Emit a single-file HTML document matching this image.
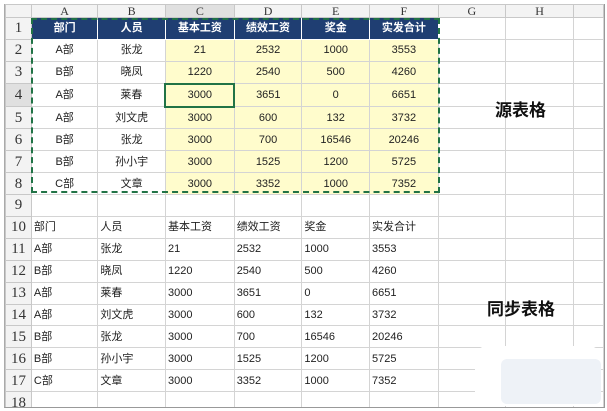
<!DOCTYPE html>
<html><head><meta charset="utf-8"><style>
body{margin:0;background:#fff;width:607px;height:411px;overflow:hidden;position:relative;font-family:"Liberation Sans","Noto Sans CJK SC",sans-serif}
#f{position:absolute;left:4px;top:4px;width:599px;height:403px;border:1px solid #999;border-top:none;border-left:1px solid #aaa;overflow:hidden;background:#fff}
table{border-collapse:collapse;table-layout:fixed;position:absolute;left:0;top:0}
td{border:1px solid #d4d4d4;padding:0;height:20.9px;font-size:11px;color:#222;white-space:nowrap;overflow:hidden;line-height:20px}
tr.h td{height:12px;line-height:12px;background:#f3f3f3;font-family:"Liberation Serif",serif;font-size:12px;text-align:center;color:#333;border-color:#c8c8c8}
td.r{background:#f3f3f3;font-family:"Liberation Serif",serif;font-size:15px;text-align:center;color:#333;border-color:#c8c8c8}
tr.t td.c{background:#1f3e72;color:#fff;font-weight:bold;text-align:center;border-color:#fff}
tr.d td.c{text-align:center}
td.y{background:#fffccc}
td.l{padding-left:2px}
.big{position:absolute;font-size:17px;font-weight:bold;color:#111;font-family:"Liberation Sans","Noto Sans CJK SC",sans-serif}
</style></head><body>
<div id="f">
<table>
<colgroup><col style="width:26px"><col style="width:67px"><col style="width:68px"><col style="width:69px"><col style="width:68px"><col style="width:68px"><col style="width:69px"><col style="width:68px"><col style="width:69px"><col style="width:30px"></colgroup>
<tr class="h"><td></td><td>A</td><td>B</td><td style="background:#e0e0e0">C</td><td>D</td><td>E</td><td>F</td><td>G</td><td>H</td><td></td></tr>
<tr class="t"><td class="r">1</td><td class="c">部门</td><td class="c">人员</td><td class="c">基本工资</td><td class="c">绩效工资</td><td class="c">奖金</td><td class="c">实发合计</td><td></td><td></td><td></td></tr>
<tr class="d"><td class="r">2</td><td class="c">A部</td><td class="c">张龙</td><td class="c y">21</td><td class="c y">2532</td><td class="c y">1000</td><td class="c y">3553</td><td></td><td></td><td></td></tr>
<tr class="d"><td class="r">3</td><td class="c">B部</td><td class="c">晓凤</td><td class="c y">1220</td><td class="c y">2540</td><td class="c y">500</td><td class="c y">4260</td><td></td><td></td><td></td></tr>
<tr class="d"><td class="r" style="background:#e0e0e0">4</td><td class="c">A部</td><td class="c">莱春</td><td class="c y" style="border:2px solid #217346">3000</td><td class="c y">3651</td><td class="c y">0</td><td class="c y">6651</td><td></td><td></td><td></td></tr>
<tr class="d"><td class="r">5</td><td class="c">A部</td><td class="c">刘文虎</td><td class="c y">3000</td><td class="c y">600</td><td class="c y">132</td><td class="c y">3732</td><td></td><td></td><td></td></tr>
<tr class="d"><td class="r">6</td><td class="c">B部</td><td class="c">张龙</td><td class="c y">3000</td><td class="c y">700</td><td class="c y">16546</td><td class="c y">20246</td><td></td><td></td><td></td></tr>
<tr class="d"><td class="r">7</td><td class="c">B部</td><td class="c">孙小宇</td><td class="c y">3000</td><td class="c y">1525</td><td class="c y">1200</td><td class="c y">5725</td><td></td><td></td><td></td></tr>
<tr class="d"><td class="r">8</td><td class="c">C部</td><td class="c">文章</td><td class="c y">3000</td><td class="c y">3352</td><td class="c y">1000</td><td class="c y">7352</td><td></td><td></td><td></td></tr>
<tr><td class="r" style="height:19px;line-height:19px">9</td><td></td><td></td><td></td><td></td><td></td><td></td><td></td><td></td><td></td></tr>
<tr><td class="r">10</td><td class="l">部门</td><td class="l">人员</td><td class="l">基本工资</td><td class="l">绩效工资</td><td class="l">奖金</td><td class="l">实发合计</td><td></td><td></td><td></td></tr>
<tr><td class="r">11</td><td class="l">A部</td><td class="l">张龙</td><td class="l">21</td><td class="l">2532</td><td class="l">1000</td><td class="l">3553</td><td></td><td></td><td></td></tr>
<tr><td class="r">12</td><td class="l">B部</td><td class="l">晓凤</td><td class="l">1220</td><td class="l">2540</td><td class="l">500</td><td class="l">4260</td><td></td><td></td><td></td></tr>
<tr><td class="r">13</td><td class="l">A部</td><td class="l">莱春</td><td class="l">3000</td><td class="l">3651</td><td class="l">0</td><td class="l">6651</td><td></td><td></td><td></td></tr>
<tr><td class="r">14</td><td class="l">A部</td><td class="l">刘文虎</td><td class="l">3000</td><td class="l">600</td><td class="l">132</td><td class="l">3732</td><td></td><td></td><td></td></tr>
<tr><td class="r">15</td><td class="l">B部</td><td class="l">张龙</td><td class="l">3000</td><td class="l">700</td><td class="l">16546</td><td class="l">20246</td><td></td><td></td><td></td></tr>
<tr><td class="r">16</td><td class="l">B部</td><td class="l">孙小宇</td><td class="l">3000</td><td class="l">1525</td><td class="l">1200</td><td class="l">5725</td><td></td><td></td><td></td></tr>
<tr><td class="r">17</td><td class="l">C部</td><td class="l">文章</td><td class="l">3000</td><td class="l">3352</td><td class="l">1000</td><td class="l">7352</td><td></td><td></td><td></td></tr>
<tr><td class="r">18</td><td></td><td></td><td></td><td></td><td></td><td></td><td></td><td></td><td></td></tr>
</table>
<div style="position:absolute;left:26px;top:14px;width:405px;height:171px;border:2px dashed #217346"></div>
<div class="big" style="left:490px;top:92px">源表格</div>
<div class="big" style="left:482px;top:291px">同步表格</div>
<div style="position:absolute;left:470px;top:342px;width:126px;height:60px;background:#fff;border-radius:12px"></div>
<div style="position:absolute;left:496px;top:355px;width:100px;height:45px;background:#eef2f7;border-radius:6px"></div>
</div>
</body></html>
